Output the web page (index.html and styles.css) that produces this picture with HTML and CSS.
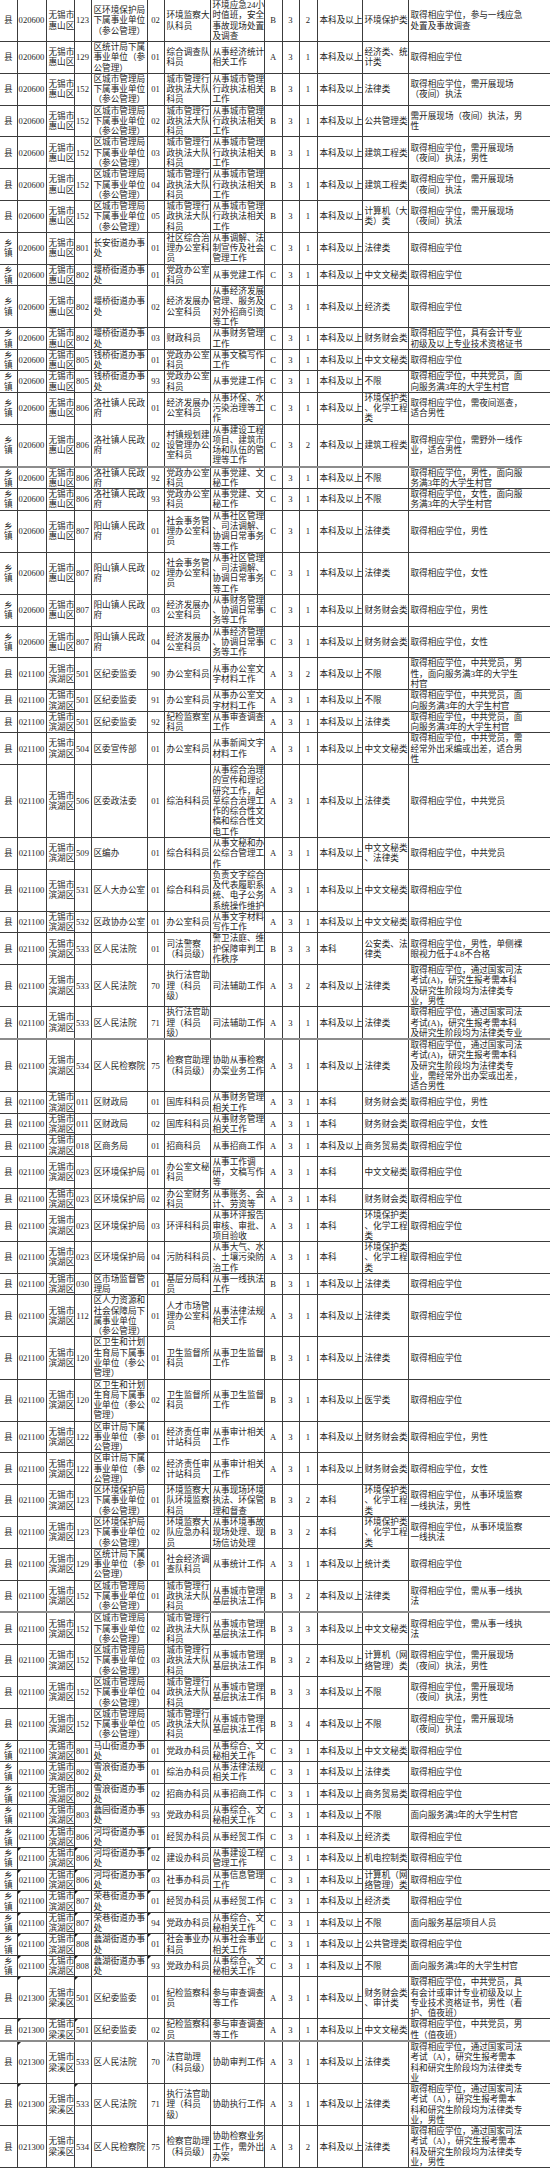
FILE: index.html
```html
<!DOCTYPE html>
<html lang="zh-CN">
<head>
<meta charset="utf-8">
<title>职位表</title>
<link rel="stylesheet" href="styles.css">
</head>
<body>
<table class="sheet">
<colgroup>
<col class="c1"><col class="c2"><col class="c3"><col class="c4"><col class="c5"><col class="c6"><col class="c7"><col class="c8"><col class="c9"><col class="c10"><col class="c11"><col class="c12"><col class="c13"><col class="c14">
</colgroup>
<tbody>
<tr><td>县</td><td>020600</td><td>无锡市<br>惠山区</td><td>123</td><td>区环境保护局<br>下属事业单位<br>（参公管理）</td><td>02</td><td>环境监察大<br>队科员</td><td>环境应急24小<br>时值班，安全<br>事故现场处置<br>及调查</td><td>B</td><td>3</td><td>2</td><td>本科及以上</td><td>环境保护类</td><td>取得相应学位，参与一线应急<br>处置及事故调查</td></tr>
<tr><td>县</td><td>020600</td><td>无锡市<br>惠山区</td><td>129</td><td>区统计局下属<br>事业单位（参<br>公管理）</td><td>01</td><td>综合调查队<br>科员</td><td>从事经济统计<br>相关工作</td><td>A</td><td>3</td><td>1</td><td>本科及以上</td><td>经济类、统<br>计类</td><td>取得相应学位</td></tr>
<tr><td>县</td><td>020600</td><td>无锡市<br>惠山区</td><td>152</td><td>区城市管理局<br>下属事业单位<br>（参公管理）</td><td>01</td><td>城市管理行<br>政执法大队<br>科员</td><td>从事城市管理<br>行政执法相关<br>工作</td><td>B</td><td>3</td><td>1</td><td>本科及以上</td><td>法律类</td><td>取得相应学位，需开展现场<br>（夜间）执法</td></tr>
<tr><td>县</td><td>020600</td><td>无锡市<br>惠山区</td><td>152</td><td>区城市管理局<br>下属事业单位<br>（参公管理）</td><td>02</td><td>城市管理行<br>政执法大队<br>科员</td><td>从事城市管理<br>行政执法相关<br>工作</td><td>B</td><td>3</td><td>1</td><td>本科及以上</td><td>公共管理类</td><td>需开展现场（夜间）执法，男<br>性</td></tr>
<tr><td>县</td><td>020600</td><td>无锡市<br>惠山区</td><td>152</td><td>区城市管理局<br>下属事业单位<br>（参公管理）</td><td>03</td><td>城市管理行<br>政执法大队<br>科员</td><td>从事城市管理<br>行政执法相关<br>工作</td><td>B</td><td>3</td><td>1</td><td>本科及以上</td><td>建筑工程类</td><td>取得相应学位，需开展现场<br>（夜间）执法，男性</td></tr>
<tr><td>县</td><td>020600</td><td>无锡市<br>惠山区</td><td>152</td><td>区城市管理局<br>下属事业单位<br>（参公管理）</td><td>04</td><td>城市管理行<br>政执法大队<br>科员</td><td>从事城市管理<br>行政执法相关<br>工作</td><td>B</td><td>3</td><td>1</td><td>本科及以上</td><td>建筑工程类</td><td>取得相应学位，需开展现场<br>（夜间）执法</td></tr>
<tr><td>县</td><td>020600</td><td>无锡市<br>惠山区</td><td>152</td><td>区城市管理局<br>下属事业单位<br>（参公管理）</td><td>05</td><td>城市管理行<br>政执法大队<br>科员</td><td>从事城市管理<br>行政执法相关<br>工作</td><td>B</td><td>3</td><td>1</td><td>本科及以上</td><td>计算机（大<br>类）类</td><td>取得相应学位，需开展现场<br>（夜间）执法</td></tr>
<tr><td>乡<br>镇</td><td>020600</td><td>无锡市<br>惠山区</td><td>801</td><td>长安街道办事<br>处</td><td>01</td><td>社区综合治<br>理办公室科<br>员</td><td>从事调解、法<br>制宣传及社会<br>管理工作</td><td>C</td><td>3</td><td>1</td><td>本科及以上</td><td>法律类</td><td>取得相应学位</td></tr>
<tr><td>乡<br>镇</td><td>020600</td><td>无锡市<br>惠山区</td><td>802</td><td>堰桥街道办事<br>处</td><td>01</td><td>党政办公室<br>科员</td><td>从事党建工作</td><td>C</td><td>3</td><td>1</td><td>本科及以上</td><td>中文文秘类</td><td>取得相应学位</td></tr>
<tr><td>乡<br>镇</td><td>020600</td><td>无锡市<br>惠山区</td><td>802</td><td>堰桥街道办事<br>处</td><td>02</td><td>经济发展办<br>公室科员</td><td>从事经济发展<br>管理、服务及<br>对外招商引资<br>等工作</td><td>C</td><td>3</td><td>1</td><td>本科及以上</td><td>经济类</td><td>取得相应学位</td></tr>
<tr><td>乡<br>镇</td><td>020600</td><td>无锡市<br>惠山区</td><td>802</td><td>堰桥街道办事<br>处</td><td>03</td><td>财政科员</td><td>从事财务管理<br>工作</td><td>C</td><td>3</td><td>1</td><td>本科及以上</td><td>财务财会类</td><td>取得相应学位，具有会计专业<br>初级及以上专业技术资格证书</td></tr>
<tr><td>乡<br>镇</td><td>020600</td><td>无锡市<br>惠山区</td><td>805</td><td>钱桥街道办事<br>处</td><td>01</td><td>党政办公室<br>科员</td><td>从事文稿写作<br>工作</td><td>C</td><td>3</td><td>1</td><td>本科及以上</td><td>中文文秘类</td><td>取得相应学位</td></tr>
<tr><td>乡<br>镇</td><td>020600</td><td>无锡市<br>惠山区</td><td>805</td><td>钱桥街道办事<br>处</td><td>93</td><td>党政办公室<br>科员</td><td>从事党建工作</td><td>C</td><td>3</td><td>1</td><td>本科及以上</td><td>不限</td><td>取得相应学位，中共党员，面<br>向服务满3年的大学生村官</td></tr>
<tr><td>乡<br>镇</td><td>020600</td><td>无锡市<br>惠山区</td><td>806</td><td>洛社镇人民政<br>府</td><td>01</td><td>经济发展办<br>公室科员</td><td>从事环保、水<br>污染治理等工<br>作</td><td>C</td><td>3</td><td>1</td><td>本科及以上</td><td>环境保护类<br>、化学工程<br>类</td><td>取得相应学位，需夜间巡查，<br>适合男性</td></tr>
<tr><td>乡<br>镇</td><td>020600</td><td>无锡市<br>惠山区</td><td>806</td><td>洛社镇人民政<br>府</td><td>02</td><td>村镇规划建<br>设管理办公<br>室科员</td><td>从事建设工程<br>项目、建筑市<br>场和队伍的管<br>理等工作</td><td>C</td><td>3</td><td>2</td><td>本科及以上</td><td>建筑工程类</td><td>取得相应学位，需野外一线作<br>业，适合男性</td></tr>
<tr class="sep"><td>乡<br>镇</td><td>020600</td><td>无锡市<br>惠山区</td><td>806</td><td>洛社镇人民政<br>府</td><td>92</td><td>党政办公室<br>科员</td><td>从事党建、文<br>秘工作</td><td>C</td><td>3</td><td>1</td><td>本科及以上</td><td>不限</td><td>取得相应学位，男性，面向服<br>务满3年的大学生村官</td></tr>
<tr><td>乡<br>镇</td><td>020600</td><td>无锡市<br>惠山区</td><td>806</td><td>洛社镇人民政<br>府</td><td>93</td><td>党政办公室<br>科员</td><td>从事党建、文<br>秘工作</td><td>C</td><td>3</td><td>1</td><td>本科及以上</td><td>不限</td><td>取得相应学位，女性，面向服<br>务满3年的大学生村官</td></tr>
<tr><td>乡<br>镇</td><td>020600</td><td>无锡市<br>惠山区</td><td>807</td><td>阳山镇人民政<br>府</td><td>01</td><td>社会事务管<br>理办公室科<br>员</td><td>从事社区管理<br>、司法调解、<br>协调日常事务<br>等工作</td><td>C</td><td>3</td><td>1</td><td>本科及以上</td><td>法律类</td><td>取得相应学位，男性</td></tr>
<tr><td>乡<br>镇</td><td>020600</td><td>无锡市<br>惠山区</td><td>807</td><td>阳山镇人民政<br>府</td><td>02</td><td>社会事务管<br>理办公室科<br>员</td><td>从事社区管理<br>、司法调解、<br>协调日常事务<br>等工作</td><td>C</td><td>3</td><td>1</td><td>本科及以上</td><td>法律类</td><td>取得相应学位，女性</td></tr>
<tr><td>乡<br>镇</td><td>020600</td><td>无锡市<br>惠山区</td><td>807</td><td>阳山镇人民政<br>府</td><td>03</td><td>经济发展办<br>公室科员</td><td>从事财务管理<br>、协调日常事<br>务等工作</td><td>C</td><td>3</td><td>1</td><td>本科及以上</td><td>财务财会类</td><td>取得相应学位，男性</td></tr>
<tr><td>乡<br>镇</td><td>020600</td><td>无锡市<br>惠山区</td><td>807</td><td>阳山镇人民政<br>府</td><td>04</td><td>经济发展办<br>公室科员</td><td>从事经济管理<br>、协调日常事<br>务等工作</td><td>C</td><td>3</td><td>1</td><td>本科及以上</td><td>财务财会类</td><td>取得相应学位，女性</td></tr>
<tr><td>县</td><td>021100</td><td>无锡市<br>滨湖区</td><td>501</td><td>区纪委监委</td><td>90</td><td>办公室科员</td><td>从事办公室文<br>字材料工作</td><td>A</td><td>3</td><td>2</td><td>本科及以上</td><td>不限</td><td>取得相应学位，中共党员，男<br>性，面向服务满3年的大学生<br>村官</td></tr>
<tr><td>县</td><td>021100</td><td>无锡市<br>滨湖区</td><td>501</td><td>区纪委监委</td><td>91</td><td>办公室科员</td><td>从事办公室文<br>字材料工作</td><td>A</td><td>3</td><td>1</td><td>本科及以上</td><td>不限</td><td>取得相应学位，中共党员，面<br>向服务满3年的大学生村官</td></tr>
<tr><td>县</td><td>021100</td><td>无锡市<br>滨湖区</td><td>501</td><td>区纪委监委</td><td>92</td><td>纪检监察室<br>科员</td><td>从事审查调查<br>工作</td><td>A</td><td>3</td><td>1</td><td>本科及以上</td><td>法律类</td><td>取得相应学位，中共党员，面<br>向服务满3年的大学生村官</td></tr>
<tr><td>县</td><td>021100</td><td>无锡市<br>滨湖区</td><td>504</td><td>区委宣传部</td><td>01</td><td>办公室科员</td><td>从事新闻文字<br>材料工作</td><td>A</td><td>3</td><td>1</td><td>本科及以上</td><td>中文文秘类</td><td>取得相应学位，中共党员，需<br>经常外出采编或出差，适合男<br>性</td></tr>
<tr><td>县</td><td>021100</td><td>无锡市<br>滨湖区</td><td>506</td><td>区委政法委</td><td>01</td><td>综治科科员</td><td>从事综合治理<br>的宣传和理论<br>研究工作，起<br>草综合治理工<br>作的综合性文<br>稿和综合性文<br>电工作</td><td>A</td><td>3</td><td>1</td><td>本科及以上</td><td>法律类</td><td>取得相应学位，中共党员</td></tr>
<tr><td>县</td><td>021100</td><td>无锡市<br>滨湖区</td><td>509</td><td>区编办</td><td>01</td><td>综合科科员</td><td>从事文秘和办<br>公综合管理工<br>作</td><td>A</td><td>3</td><td>1</td><td>本科及以上</td><td>中文文秘类<br>、法律类</td><td>取得相应学位，中共党员</td></tr>
<tr><td>县</td><td>021100</td><td>无锡市<br>滨湖区</td><td>531</td><td>区人大办公室</td><td>01</td><td>综合科科员</td><td>负责文字综合<br>及代表履职系<br>统、电子公务<br>系统操作维护</td><td>A</td><td>3</td><td>1</td><td>本科及以上</td><td>中文文秘类</td><td>取得相应学位</td></tr>
<tr><td>县</td><td>021100</td><td>无锡市<br>滨湖区</td><td>532</td><td>区政协办公室</td><td>01</td><td>办公室科员</td><td>从事文字材料<br>写作工作</td><td>A</td><td>3</td><td>1</td><td>本科及以上</td><td>中文文秘类</td><td>取得相应学位</td></tr>
<tr><td>县</td><td>021100</td><td>无锡市<br>滨湖区</td><td>533</td><td>区人民法院</td><td>01</td><td>司法警察<br>（科员级）</td><td>警卫法庭、维<br>护保障审判工<br>作秩序</td><td>B</td><td>3</td><td>3</td><td>本科</td><td>公安类、法<br>律类</td><td>取得相应学位，男性，单侧裸<br>眼视力低于4.8不合格</td></tr>
<tr><td>县</td><td>021100</td><td>无锡市<br>滨湖区</td><td>533</td><td>区人民法院</td><td>70</td><td>执行法官助<br>理（科员<br>级）</td><td>司法辅助工作</td><td>A</td><td>3</td><td>2</td><td>本科及以上</td><td>法律类</td><td>取得相应学位，通过国家司法<br>考试(A)，研究生报考需本科<br>及研究生阶段均为法律类专<br>业，男性</td></tr>
<tr><td>县</td><td>021100</td><td>无锡市<br>滨湖区</td><td>533</td><td>区人民法院</td><td>71</td><td>执行法官助<br>理（科员<br>级）</td><td>司法辅助工作</td><td>A</td><td>3</td><td>1</td><td>本科及以上</td><td>法律类</td><td>取得相应学位，通过国家司法<br>考试(A)，研究生报考需本科<br>及研究生阶段均为法律类专业</td></tr>
<tr class="sep"><td>县</td><td>021100</td><td>无锡市<br>滨湖区</td><td>534</td><td>区人民检察院</td><td>75</td><td>检察官助理<br>（科员级）</td><td>协助从事检察<br>办案业务工作</td><td>A</td><td>3</td><td>1</td><td>本科及以上</td><td>法律类</td><td>取得相应学位，通过国家司法<br>考试(A)，研究生报考需本科<br>及研究生阶段均为法律类专<br>业，需经常外出办案或出差，<br>适合男性</td></tr>
<tr><td>县</td><td>021100</td><td>无锡市<br>滨湖区</td><td>011</td><td>区财政局</td><td>01</td><td>国库科科员</td><td>从事财务管理<br>相关工作</td><td>A</td><td>3</td><td>1</td><td>本科</td><td>财务财会类</td><td>取得相应学位，男性</td></tr>
<tr><td>县</td><td>021100</td><td>无锡市<br>滨湖区</td><td>011</td><td>区财政局</td><td>02</td><td>国库科科员</td><td>从事财务管理<br>相关工作</td><td>A</td><td>3</td><td>1</td><td>本科</td><td>财务财会类</td><td>取得相应学位，女性</td></tr>
<tr><td>县</td><td>021100</td><td>无锡市<br>滨湖区</td><td>018</td><td>区商务局</td><td>01</td><td>招商科员</td><td>从事招商工作</td><td>A</td><td>3</td><td>1</td><td>本科及以上</td><td>商务贸易类</td><td>取得相应学位</td></tr>
<tr><td>县</td><td>021100</td><td>无锡市<br>滨湖区</td><td>023</td><td>区环境保护局</td><td>01</td><td>办公室文秘<br>科员</td><td>从事工作调<br>研，文稿写作<br>等</td><td>A</td><td>3</td><td>1</td><td>本科</td><td>中文文秘类</td><td>取得相应学位</td></tr>
<tr><td>县</td><td>021100</td><td>无锡市<br>滨湖区</td><td>023</td><td>区环境保护局</td><td>02</td><td>办公室财务<br>科员</td><td>从事账务、会<br>计、劳资等</td><td>A</td><td>3</td><td>1</td><td>本科</td><td>财务财会类</td><td>取得相应学位</td></tr>
<tr><td>县</td><td>021100</td><td>无锡市<br>滨湖区</td><td>023</td><td>区环境保护局</td><td>03</td><td>环评科科员</td><td>从事环评报告<br>审核、审批、<br>项目验收</td><td>A</td><td>3</td><td>1</td><td>本科</td><td>环境保护类<br>、化学工程<br>类</td><td>取得相应学位</td></tr>
<tr><td>县</td><td>021100</td><td>无锡市<br>滨湖区</td><td>023</td><td>区环境保护局</td><td>04</td><td>污防科科员</td><td>从事大气、水<br>、土壤污染防<br>治工作</td><td>A</td><td>3</td><td>1</td><td>本科</td><td>环境保护类<br>、化学工程<br>类</td><td>取得相应学位</td></tr>
<tr><td>县</td><td>021100</td><td>无锡市<br>滨湖区</td><td>030</td><td>区市场监督管<br>理局</td><td>01</td><td>基层分局科<br>员</td><td>从事一线执法<br>工作</td><td>B</td><td>3</td><td>1</td><td>本科及以上</td><td>法律类</td><td>取得相应学位</td></tr>
<tr><td>县</td><td>021100</td><td>无锡市<br>滨湖区</td><td>112</td><td>区人力资源和<br>社会保障局下<br>属事业单位<br>（参公管理）</td><td>01</td><td>人才市场管<br>理办公室科<br>员</td><td>从事法律法规<br>相关工作</td><td>A</td><td>3</td><td>1</td><td>本科及以上</td><td>法律类</td><td>取得相应学位</td></tr>
<tr><td>县</td><td>021100</td><td>无锡市<br>滨湖区</td><td>120</td><td>区卫生和计划<br>生育局下属事<br>业单位（参公<br>管理）</td><td>01</td><td>卫生监督所<br>科员</td><td>从事卫生监督<br>工作</td><td>B</td><td>3</td><td>1</td><td>本科及以上</td><td>法律类</td><td>取得相应学位</td></tr>
<tr><td>县</td><td>021100</td><td>无锡市<br>滨湖区</td><td>120</td><td>区卫生和计划<br>生育局下属事<br>业单位（参公<br>管理）</td><td>02</td><td>卫生监督所<br>科员</td><td>从事卫生监督<br>工作</td><td>B</td><td>3</td><td>1</td><td>本科及以上</td><td>医学类</td><td>取得相应学位</td></tr>
<tr><td>县</td><td>021100</td><td>无锡市<br>滨湖区</td><td>122</td><td>区审计局下属<br>事业单位（参<br>公管理）</td><td>01</td><td>经济责任审<br>计站科员</td><td>从事审计相关<br>工作</td><td>A</td><td>3</td><td>1</td><td>本科及以上</td><td>财务财会类</td><td>取得相应学位，男性</td></tr>
<tr><td>县</td><td>021100</td><td>无锡市<br>滨湖区</td><td>122</td><td>区审计局下属<br>事业单位（参<br>公管理）</td><td>02</td><td>经济责任审<br>计站科员</td><td>从事审计相关<br>工作</td><td>A</td><td>3</td><td>1</td><td>本科及以上</td><td>财务财会类</td><td>取得相应学位，女性</td></tr>
<tr><td>县</td><td>021100</td><td>无锡市<br>滨湖区</td><td>123</td><td>区环境保护局<br>下属事业单位<br>（参公管理）</td><td>01</td><td>环境监察大<br>队环境监察<br>科员</td><td>从事现场环境<br>执法、环保管<br>理和督查</td><td>B</td><td>3</td><td>2</td><td>本科</td><td>环境保护类<br>、化学工程<br>类</td><td>取得相应学位，从事环境监察<br>一线执法，男性</td></tr>
<tr><td>县</td><td>021100</td><td>无锡市<br>滨湖区</td><td>123</td><td>区环境保护局<br>下属事业单位<br>（参公管理）</td><td>02</td><td>环境监察大<br>队应急办科<br>员</td><td>从事环境事故<br>现场处理、现<br>场信访处理</td><td>B</td><td>3</td><td>2</td><td>本科</td><td>环境保护类<br>、化学工程<br>类</td><td>取得相应学位，从事环境监察<br>一线执法</td></tr>
<tr><td>县</td><td>021100</td><td>无锡市<br>滨湖区</td><td>129</td><td>区统计局下属<br>事业单位（参<br>公管理）</td><td>01</td><td>社会经济调<br>查队科员</td><td>从事统计工作</td><td>A</td><td>3</td><td>1</td><td>本科及以上</td><td>统计类</td><td>取得相应学位</td></tr>
<tr><td>县</td><td>021100</td><td>无锡市<br>滨湖区</td><td>152</td><td>区城市管理局<br>下属事业单位<br>（参公管理）</td><td>01</td><td>城市管理行<br>政执法大队<br>科员</td><td>从事城市管理<br>基层执法工作</td><td>B</td><td>3</td><td>2</td><td>本科及以上</td><td>法律类</td><td>取得相应学位，需从事一线执<br>法</td></tr>
<tr class="sep"><td>县</td><td>021100</td><td>无锡市<br>滨湖区</td><td>152</td><td>区城市管理局<br>下属事业单位<br>（参公管理）</td><td>02</td><td>城市管理行<br>政执法大队<br>科员</td><td>从事城市管理<br>基层执法工作</td><td>B</td><td>3</td><td>3</td><td>本科及以上</td><td>中文文秘类</td><td>取得相应学位，需从事一线执<br>法</td></tr>
<tr><td>县</td><td>021100</td><td>无锡市<br>滨湖区</td><td>152</td><td>区城市管理局<br>下属事业单位<br>（参公管理）</td><td>03</td><td>城市管理行<br>政执法大队<br>科员</td><td>从事城市管理<br>基层执法工作</td><td>B</td><td>3</td><td>2</td><td>本科及以上</td><td>计算机（网<br>络管理）类</td><td>取得相应学位，需开展现场<br>（夜间）执法，男性</td></tr>
<tr><td>县</td><td>021100</td><td>无锡市<br>滨湖区</td><td>152</td><td>区城市管理局<br>下属事业单位<br>（参公管理）</td><td>04</td><td>城市管理行<br>政执法大队<br>科员</td><td>从事城市管理<br>基层执法工作</td><td>B</td><td>3</td><td>3</td><td>本科及以上</td><td>不限</td><td>取得相应学位，需开展现场<br>（夜间）执法，男性</td></tr>
<tr><td>县</td><td>021100</td><td>无锡市<br>滨湖区</td><td>152</td><td>区城市管理局<br>下属事业单位<br>（参公管理）</td><td>05</td><td>城市管理行<br>政执法大队<br>科员</td><td>从事城市管理<br>基层执法工作</td><td>B</td><td>3</td><td>4</td><td>本科及以上</td><td>不限</td><td>取得相应学位，需开展现场<br>（夜间）执法</td></tr>
<tr><td>乡<br>镇</td><td>021100</td><td>无锡市<br>滨湖区</td><td>801</td><td>马山街道办事<br>处</td><td>01</td><td>党政办科员</td><td>从事综合、文<br>秘相关工作</td><td>C</td><td>3</td><td>1</td><td>本科及以上</td><td>中文文秘类</td><td>取得相应学位</td></tr>
<tr><td>乡<br>镇</td><td>021100</td><td>无锡市<br>滨湖区</td><td>802</td><td>雪浪街道办事<br>处</td><td>01</td><td>综治办科员</td><td>从事法律法规<br>相关工作</td><td>C</td><td>3</td><td>1</td><td>本科及以上</td><td>法律类</td><td>取得相应学位</td></tr>
<tr><td>乡<br>镇</td><td>021100</td><td>无锡市<br>滨湖区</td><td>802</td><td>雪浪街道办事<br>处</td><td>02</td><td>招商办科员</td><td>从事招商工作</td><td>C</td><td>3</td><td>1</td><td>本科及以上</td><td>商务贸易类</td><td>取得相应学位</td></tr>
<tr><td>乡<br>镇</td><td>021100</td><td>无锡市<br>滨湖区</td><td>803</td><td>蠡园街道办事<br>处</td><td>93</td><td>党政办科员</td><td>从事综合、文<br>秘相关工作</td><td>C</td><td>3</td><td>1</td><td>本科及以上</td><td>不限</td><td>面向服务满3年的大学生村官</td></tr>
<tr><td>乡<br>镇</td><td>021100</td><td>无锡市<br>滨湖区</td><td>806</td><td>河埒街道办事<br>处</td><td>01</td><td>经贸办科员</td><td>从事经贸工作</td><td>C</td><td>3</td><td>1</td><td>本科及以上</td><td>经济类</td><td>取得相应学位</td></tr>
<tr><td>乡<br>镇</td><td class="mk">021100</td><td>无锡市<br>滨湖区</td><td class="mk">806</td><td>河埒街道办事<br>处</td><td class="mk">02</td><td>建设办科员</td><td>从事建设工程<br>管理工作</td><td>C</td><td>3</td><td>1</td><td>本科及以上</td><td>机电控制类</td><td>取得相应学位</td></tr>
<tr><td>乡<br>镇</td><td class="mk">021100</td><td>无锡市<br>滨湖区</td><td class="mk">806</td><td>河埒街道办事<br>处</td><td class="mk">03</td><td>社事办科员</td><td>从事信息管理<br>工作</td><td>C</td><td>3</td><td>1</td><td>本科及以上</td><td>计算机（网<br>络管理）类</td><td>取得相应学位</td></tr>
<tr><td>乡<br>镇</td><td class="mk">021100</td><td>无锡市<br>滨湖区</td><td class="mk">807</td><td>荣巷街道办事<br>处</td><td class="mk">01</td><td>经贸办科员</td><td>从事经贸工作</td><td>C</td><td>3</td><td>1</td><td>本科及以上</td><td>经济类</td><td>取得相应学位</td></tr>
<tr><td>乡<br>镇</td><td class="mk">021100</td><td>无锡市<br>滨湖区</td><td class="mk">807</td><td>荣巷街道办事<br>处</td><td class="mk">94</td><td>党政办科员</td><td>从事综合、文<br>秘相关工作</td><td>C</td><td>3</td><td>1</td><td>本科及以上</td><td>不限</td><td>面向服务基层项目人员</td></tr>
<tr><td>乡<br>镇</td><td class="mk">021100</td><td>无锡市<br>滨湖区</td><td class="mk">808</td><td>蠡湖街道办事<br>处</td><td class="mk">01</td><td>社会事业办<br>科员</td><td>从事社会事业<br>相关工作</td><td>C</td><td>3</td><td>1</td><td>本科及以上</td><td>公共管理类</td><td>取得相应学位</td></tr>
<tr><td>乡<br>镇</td><td class="mk">021100</td><td>无锡市<br>滨湖区</td><td class="mk">808</td><td>蠡湖街道办事<br>处</td><td class="mk">93</td><td>党政办科员</td><td>从事综合、文<br>秘相关工作</td><td>C</td><td>3</td><td>1</td><td>本科及以上</td><td>不限</td><td>面向服务满3年的大学生村官</td></tr>
<tr><td>县</td><td class="mk">021300</td><td>无锡市<br>梁溪区</td><td class="mk">501</td><td>区纪委监委</td><td>01</td><td>纪检监察科<br>员</td><td>参与审查调查<br>等工作</td><td>A</td><td>3</td><td>1</td><td>本科及以上</td><td>财务财会类<br>、审计类</td><td>取得相应学位，中共党员，具<br>有会计或审计专业初级及以上<br>专业技术资格证书，男性（看<br>护、值夜班）</td></tr>
<tr><td>县</td><td class="mk">021300</td><td>无锡市<br>梁溪区</td><td class="mk">501</td><td>区纪委监委</td><td>02</td><td>纪检监察科<br>员</td><td>参与审查调查<br>等工作</td><td>A</td><td>3</td><td>1</td><td>本科及以上</td><td>中文文秘类</td><td>取得相应学位，中共党员，男<br>性（值夜班）</td></tr>
<tr class="sep"><td>县</td><td class="mk">021300</td><td>无锡市<br>梁溪区</td><td>533</td><td>区人民法院</td><td>70</td><td>法官助理<br>（科员级）</td><td>协助审判工作</td><td>A</td><td>3</td><td>1</td><td>本科及以上</td><td>法律类</td><td>取得相应学位，通过国家司法<br>考试（A），研究生报考需本<br>科和研究生阶段均为法律类专<br>业</td></tr>
<tr><td>县</td><td class="mk">021300</td><td>无锡市<br>梁溪区</td><td class="mk">533</td><td>区人民法院</td><td>71</td><td>执行法官助<br>理（科员<br>级）</td><td>协助执行工作</td><td>A</td><td>3</td><td>1</td><td>本科及以上</td><td>法律类</td><td>取得相应学位，通过国家司法<br>考试（A），研究生报考需本<br>科和研究生阶段均为法律类专<br>业，男性</td></tr>
<tr><td>县</td><td>021300</td><td>无锡市<br>梁溪区</td><td>534</td><td>区人民检察院</td><td>75</td><td>检察官助理<br>（科员级）</td><td>协助检察业务<br>工作，需外出<br>办案</td><td>A</td><td>3</td><td>2</td><td>本科及以上</td><td>法律类</td><td>取得相应学位，通过国家司法<br>考试（A），研究生报考需本<br>科及研究生阶段均为法律类专<br>业，男性</td></tr>
</tbody>
</table>
</body>
</html>
```

FILE: styles.css
```css
html, body {
  margin: 0;
  padding: 0;
  background: #ffffff;
}

.sheet {
  border-collapse: collapse;
  table-layout: fixed;
  width: 550px;
  font-family: "Liberation Serif", "Noto Sans CJK SC", serif;
  font-size: 8.6px;
  line-height: 10.27px;
  color: #262626;
}

.c1 { width: 17px; }
.c2 { width: 29px; }
.c3 { width: 28px; }
.c4 { width: 17px; }
.c5 { width: 56px; }
.c6 { width: 17px; }
.c7 { width: 46px; }
.c8 { width: 54px; }
.c9 { width: 18px; }
.c10 { width: 17px; }
.c11 { width: 18px; }
.c12 { width: 45px; }
.c13 { width: 46px; }
.c14 { width: 142px; }

.sheet td {
  border: 1px solid #3c3c3c;
  padding: 0 0 0 2px;
  white-space: nowrap;
  overflow: hidden;
  vertical-align: middle;
  text-align: left;
}

.sheet td:nth-child(1),
.sheet td:nth-child(2),
.sheet td:nth-child(4),
.sheet td:nth-child(6),
.sheet td:nth-child(9),
.sheet td:nth-child(10),
.sheet td:nth-child(11) {
  text-align: center;
  padding: 0;
}

.sheet tr:first-child td {
  border-top: none;
}

.sheet td:first-child {
  border-left: none;
}

.sheet td:last-child {
  border-right: none;
}

.sheet tr.sep td {
  border-top: 2px solid #8c8c8c;
}

.sheet td.mk {
  position: relative;
}

.sheet td.mk::before {
  content: "";
  position: absolute;
  left: 0;
  top: 0;
  border-top: 3px solid #1a1a1a;
  border-right: 3px solid transparent;
}
```
